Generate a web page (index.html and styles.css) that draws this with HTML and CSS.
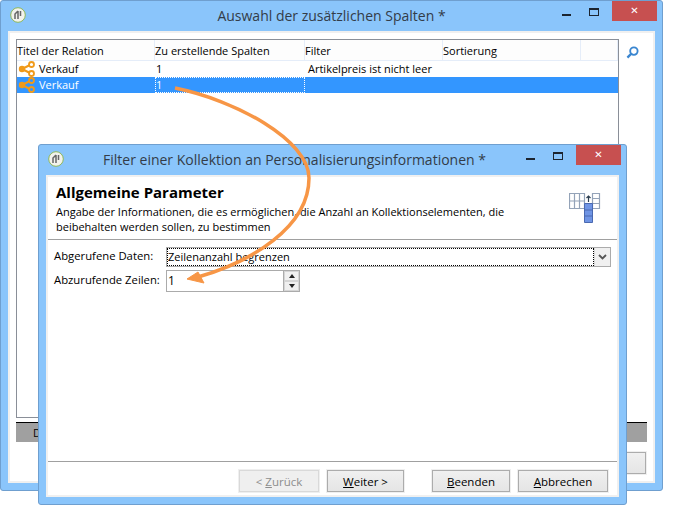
FILE: index.html
```html
<!DOCTYPE html>
<html lang="de">
<head>
<meta charset="utf-8">
<title>Auswahl der zusätzlichen Spalten</title>
<link rel="stylesheet" href="styles.css">
</head>
<body>
<section class="window back">
  <header class="titlebar">
    <svg class="appicon" viewBox="0 0 16 16"><circle cx="8" cy="8" r="7.3" fill="#f2f2ec" stroke="#8fb85a"/><path d="M5 12V7l3-3M8 4v8M10.500 4v5" fill="none" stroke="#666" stroke-width="1.500"/></svg>
    <h1 class="title back-title">Auswahl der zusätzlichen Spalten *</h1>
    <div class="controls">
      <span class="min"></span><span class="max"></span><span class="close">✕</span>
    </div>
  </header>
  <div class="client back-client">
    <div class="table-row">
      <div class="table">
        <div class="thead">
          <span class="c1">Titel der Relation</span><span class="c2">Zu erstellende Spalten</span><span class="c3">Filter</span><span class="c4">Sortierung</span><span class="c5"></span>
        </div>
        <div class="row">
          <span class="c1 name">
            <svg class="share" viewBox="0 0 18 18"><path d="M4 9l9-4.500M4 9l9 4.500" stroke="#f09a1a" stroke-width="2" fill="none"/><circle cx="4" cy="9" r="3.200" fill="#f09a1a"/><circle cx="13.500" cy="4.500" r="2.500" fill="#fff" stroke="#f09a1a" stroke-width="1.800"/><circle cx="13.500" cy="13.500" r="2.500" fill="#fff" stroke="#f09a1a" stroke-width="1.800"/></svg>
            Verkauf</span><span class="c2 num">1</span><span class="c3 filter">Artikelpreis ist nicht leer</span>
        </div>
        <div class="row selected">
          <span class="c1 name">
            <svg class="share" viewBox="0 0 18 18"><path d="M4 9l9-4.500M4 9l9 4.500" stroke="#f09a1a" stroke-width="2" fill="none"/><circle cx="4" cy="9" r="3.200" fill="#f09a1a"/><circle cx="13.500" cy="4.500" r="2.500" fill="#3396ff" stroke="#f09a1a" stroke-width="1.800"/><circle cx="13.500" cy="13.500" r="2.500" fill="#3396ff" stroke="#f09a1a" stroke-width="1.800"/></svg>
            Verkauf</span><span class="c2 num focus">1</span>
        </div>
      </div>
      <svg class="search" viewBox="0 0 14 14"><circle cx="8.500" cy="5.500" r="4" fill="none" stroke="#3a86d0" stroke-width="2"/><path d="M5.500 8.500L1.500 12.500" stroke="#3a86d0" stroke-width="2.400"/></svg>
    </div>
    <div class="graybar"><span>D</span></div>
    <div class="back-actions"><span class="btn back-btn">n</span></div>
  </div>
</section>

<section class="window front">
  <header class="titlebar">
    <svg class="appicon" viewBox="0 0 16 16"><circle cx="8" cy="8" r="7.3" fill="#f2f2ec" stroke="#8fb85a"/><path d="M5 12V7l3-3M8 4v8M10.500 4v5" fill="none" stroke="#666" stroke-width="1.500"/></svg>
    <h1 class="title front-title">Filter einer Kollektion an Personalisierungsinformationen *</h1>
    <div class="controls">
      <span class="min"></span><span class="max"></span><span class="close">✕</span>
    </div>
  </header>
  <div class="client front-client">
    <div class="intro">
      <div class="intro-text">
        <h2>Allgemeine Parameter</h2>
        <p>Angabe der Informationen, die es ermöglichen, die Anzahl an Kollektionselementen, die beibehalten werden sollen, zu bestimmen</p>
      </div>
      <svg class="gridicon" viewBox="0 0 32 30">
        <path d="M.5.500h15v15H.5zM.5 8h15M5.500.5v15M10.500.5v15M23.500.5h7v15h-7zM23.500 5.500h7M23.500 10.500h7" fill="#fff" stroke="#94a3b8" stroke-width="1.200"/>
        <path d="M15.500 10.500h8v19h-8z" fill="#6f94e4" stroke="#4a69b0"/>
        <path d="M15.500 17h8M15.500 23h8" stroke="#4a69b0"/>
        <path d="M19.500 9V3M17.500 5l2-2 2 2" fill="none" stroke="#2c3e50" stroke-width="1.200"/>
      </svg>
    </div>
    <div class="form">
      <div class="field">
        <label>Abgerufene Daten:</label>
        <div class="select"><span class="select-value">Zeilenanzahl begrenzen</span><span class="select-btn"><svg viewBox="0 0 9 6"><path d="M1 1l3.500 3.500L8 1" fill="none" stroke="#555" stroke-width="1.800"/></svg></span></div>
      </div>
      <div class="field">
        <label>Abzurufende Zeilen:</label>
        <div class="spin"><span class="spin-value">1</span><span class="spin-btns"><i class="up"></i><i class="down"></i></span></div>
      </div>
    </div>
    <footer class="actions">
      <span class="btn disabled w80"><span>&lt; <u>Z</u>urück</span></span>
      <span class="btn w77"><span><u>W</u>eiter &gt;</span></span>
      <span class="btn gap w78"><span><u>B</u>eenden</span></span>
      <span class="btn w90"><span><u>A</u>bbrechen</span></span>
    </footer>
  </div>
</section>

<svg class="arrow" viewBox="0 0 681 520">
  <path d="M175 88C235 100 309 140 309 178C309 228 250 262 198 277" fill="none" stroke="#f79646" stroke-width="3.500"/>
  <path d="M187 279L198 272L204 283Z" fill="#f79646" stroke="#f79646" stroke-linejoin="round"/>
</svg>
</body>
</html>
```
FILE: styles.css
```css
* { box-sizing: border-box; }
html, body { margin: 0; padding: 0; }
body {
  width: 681px;
  height: 520px;
  position: relative;
  overflow: hidden;
  background: #fff;
  font-family: "Open Sans", sans-serif;
  font-size: 11px;
  color: #000;
}
.window {
  position: absolute;
  display: flex;
  flex-direction: column;
  background: #8ac5fb;
  border: 1px solid #6f9fcf;
  border-radius: 3px;
  padding: 0 7px 7px;
}
.back { left: 0; top: 0; width: 663px; height: 491px; }
.front { left: 38px; top: 144px; width: 589px; height: 361px; }
.titlebar {
  height: 30px;
  flex: none;
  position: relative;
  display: flex;
  justify-content: center;
}
.appicon { position: absolute; left: 2px; top: 6px; width: 16px; height: 16px; }
.title {
  margin: 0;
  font-weight: 400;
  font-size: 14px;
  line-height: 30px;
  color: #333c48;
}
.front-title { padding-right: 76px; }
.controls {
  position: absolute;
  right: -2px;
  top: 0;
  display: flex;
  align-items: flex-start;
}
.min { width: 9px; height: 2px; margin: 13px 18px 0 0; background: #1c2530; }
.max { width: 10px; height: 8px; margin: 7px 13px 0 0; border: 1px solid #1c2530; border-top-width: 2px; }
.close {
  width: 45px;
  height: 20px;
  background: #c75050;
  color: #fff;
  font-family: "DejaVu Sans", sans-serif;
  font-size: 10px;
  font-weight: 700;
  line-height: 20px;
  text-align: center;
}
.client {
  flex: 1;
  display: flex;
  flex-direction: column;
  background: #fff;
  border: 2px solid #f0f0f0;
  min-height: 0;
}
.back-client { padding: 6px 7px 7px 6px; }
.table-row { display: flex; height: 379px; flex: none; }
.table {
  width: 603px;
  border: 1px solid #8a8f98;
  background: #fff;
  flex: none;
}
.thead { display: flex; height: 21px; background: #fdfdfd; border-bottom: 1px solid #e5edf9; line-height: 22px; }
.thead span { border-right: 1px solid #e5edf9; height: 20px; white-space: nowrap; }
.c1 { width: 138px; flex: none; }
.c2 { width: 150px; flex: none; }
.c3 { width: 138px; flex: none; }
.c4 { width: 138px; flex: none; }
.c5 { width: 37px; flex: none; }
.row { display: flex; height: 16px; line-height: 16px; white-space: nowrap; }
.name { display: flex; align-items: center; gap: 3px; padding-left: 1px; }
.share { width: 18px; height: 18px; flex: none; }
.num { padding-left: 1px; }
.filter { padding-left: 3px; }
.selected { background: #3396ff; color: #fff; }
.focus { outline: 1px dotted #fff; outline-offset: -1px; }
.search { width: 13px; height: 13px; margin: 7px 0 0 7px; flex: none; }
.graybar {
  flex: none;
  margin-top: 4px;
  width: 631px;
  height: 20px;
  background: #a0a0a0;
  border-top: 1px solid #000;
  line-height: 19px;
  padding-left: 17px;
}
.back-actions { display: flex; justify-content: flex-end; margin-top: 10px; }
.back-btn { width: 78px; height: 22px; justify-content: flex-end; padding-right: 14px; }
.intro { height: 63px; flex: none; display: flex; justify-content: space-between; border-bottom: 1px solid #a0a0a0; margin-bottom: 7px; }
.intro-text { width: 480px; padding: 6px 0 0 8px; }
.intro h2 { margin: 0; font-size: 15px; line-height: 19px; font-weight: 700; color: #000; }
.intro p { margin: 3px 0 0; line-height: 14.500px; font-size: 11px; white-space: normal; }
.gridicon { width: 32px; height: 30px; margin: 16px 16px 0 0; }
.form { flex: 1; display: flex; flex-direction: column; gap: 3px; padding: 0 6px 0 6px; min-height: 0; }
.field { display: flex; align-items: center; }
.field label { width: 112px; flex: none; line-height: 15px; padding-bottom: 3px; white-space: nowrap; font-size: 11.300px; }
.select {
  flex: 1;
  height: 20px;
  display: flex;
  border: 1px solid #ababab;
  background: #fff;
}
.select-value { flex: 1; border: 1px dotted #000; line-height: 16px; }
.select-btn { width: 16px; background: #f0f0f0; border-left: 1px solid #d8d8d8; display: flex; align-items: center; justify-content: center; }
.select-btn svg { width: 9px; height: 6px; }
.spin {
  width: 134px;
  height: 22px;
  display: flex;
  justify-content: space-between;
  border: 1px solid #ababab;
}
.spin-value { padding-left: 1px; line-height: 19px; font-size: 12px; }
.spin-btns { width: 16px; display: flex; flex-direction: column; border-left: 1px solid #ababab; }
.spin-btns i { flex: 1; background: #f0f0f0; border: 1px solid #d5d5d5; display: flex; align-items: center; justify-content: center; }
.up::before { content: ""; border: 3px solid transparent; border-top: 0; border-bottom: 4px solid #222; }
.down::before { content: ""; border: 3px solid transparent; border-bottom: 0; border-top: 4px solid #222; }
.actions {
  flex: none;
  height: 34px;
  border-top: 1px solid #a0a0a0;
  display: flex;
  align-items: flex-start;
  justify-content: flex-end;
  gap: 8px;
  padding: 8px 9px 0 0;
  background: #fff;
  margin-top: auto;
}
.btn {
  height: 22px;
  display: flex;
  align-items: center;
  justify-content: center;
  font-size: 11.500px;
  background: linear-gradient(#f0f0f0, #e5e5e5);
  border: 1px solid #acacac;
  outline: 1px solid #efefef;
  white-space: nowrap;
}
.w80 { width: 80px; }
.w77 { width: 77px; }
.w78 { width: 78px; }
.w90 { width: 90px; }
.btn.gap { margin-left: 20px; }
.btn.disabled { color: #8d8d8d; background: #efefef; border-color: #d9d9d9; }
.arrow { position: absolute; left: 0; top: 0; width: 681px; height: 520px; pointer-events: none; }
```
